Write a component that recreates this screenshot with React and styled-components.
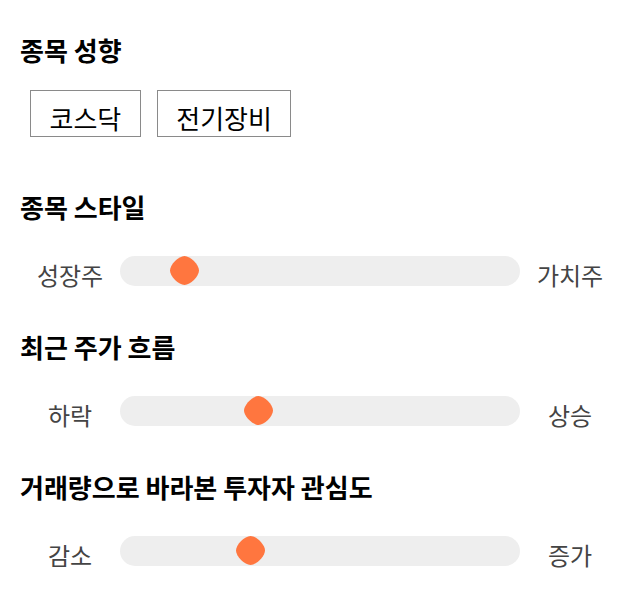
import React from 'react'
import styled, {createGlobalStyle} from 'styled-components'

const GlobalStyle = createGlobalStyle`
body{
  margin:0;
  background:#fff;
  font-family:"Noto Sans CJK KR","Noto Sans",sans-serif;
}
`;

const sectors = ['코스닥', '전기장비'];

const sliders = [
  {title: '종목 스타일', left: '성장주', right: '가치주', value: 13.5},
  {title: '최근 주가 흐름', left: '하락', right: '상승', value: 33.3},
  {title: '거래량으로 바라본 투자자 관심도', left: '감소', right: '증가', value: 31.2},
];

const TRACK = 400;
const THUMB = 29;

function Thumb({value}) {
  return (
    <Knob style={{left: (value / 100) * (TRACK - THUMB)}} viewBox="0 0 30 30">
      <path d="M15 0 C21 0 30 9 30 15 C30 21 21 30 15 30 C9 30 0 21 0 15 C0 9 9 0 15 0 Z" fill="#ff763f"/>
    </Knob>
  )
}

function App() {
  return (
    <Page>
      <GlobalStyle/>
      <Title>종목 성향</Title>
      <TagRow>
        {sectors.map(s => <Tag key={s}>{s}</Tag>)}
      </TagRow>
      {sliders.map((s, i) => (
        <Block key={s.title} first={i === 0}>
          <Title>{s.title}</Title>
          <SliderRow>
            <Label>{s.left}</Label>
            <Track>
              <Thumb value={s.value}/>
            </Track>
            <Label>{s.right}</Label>
          </SliderRow>
        </Block>
      ))}
    </Page>
  )
}

export default App

const Page = styled.div`
padding:33px 0 0 20px;
width:640px;
box-sizing:border-box;
`;

const Title = styled.h2`
margin:0;
font-size:26px;
line-height:34px;
font-weight:700;
color:#000;
white-space:nowrap;
`;

const TagRow = styled.div`
display:flex;
gap:16px;
margin:23px 0 0 10px;
`;

const Tag = styled.button`
font-family:"Noto Sans CJK KR","Noto Sans",sans-serif;
font-size:26px;
line-height:35px;
color:#000;
background:#fff;
border:1px solid #8a8a8a;
border-radius:0;
padding:9px 18.5px 1px;
margin:0;
cursor:pointer;
`;

const Block = styled.div`
margin-top:${({first})=>first?"53px":"40px"};
`;

const SliderRow = styled.div`
display:flex;
align-items:flex-start;
margin-top:32px;
`;

const Label = styled.span`
width:100px;
flex:none;
margin-top:4px;
text-align:center;
font-size:24px;
line-height:30px;
color:#444;
white-space:nowrap;
`;

const Track = styled.div`
position:relative;
width:${TRACK}px;
height:30px;
flex:none;
border-radius:15px;
background:#eeeeee;
`;

const Knob = styled.svg`
position:absolute;
top:0;
width:${THUMB}px;
height:${THUMB}px;
`;
